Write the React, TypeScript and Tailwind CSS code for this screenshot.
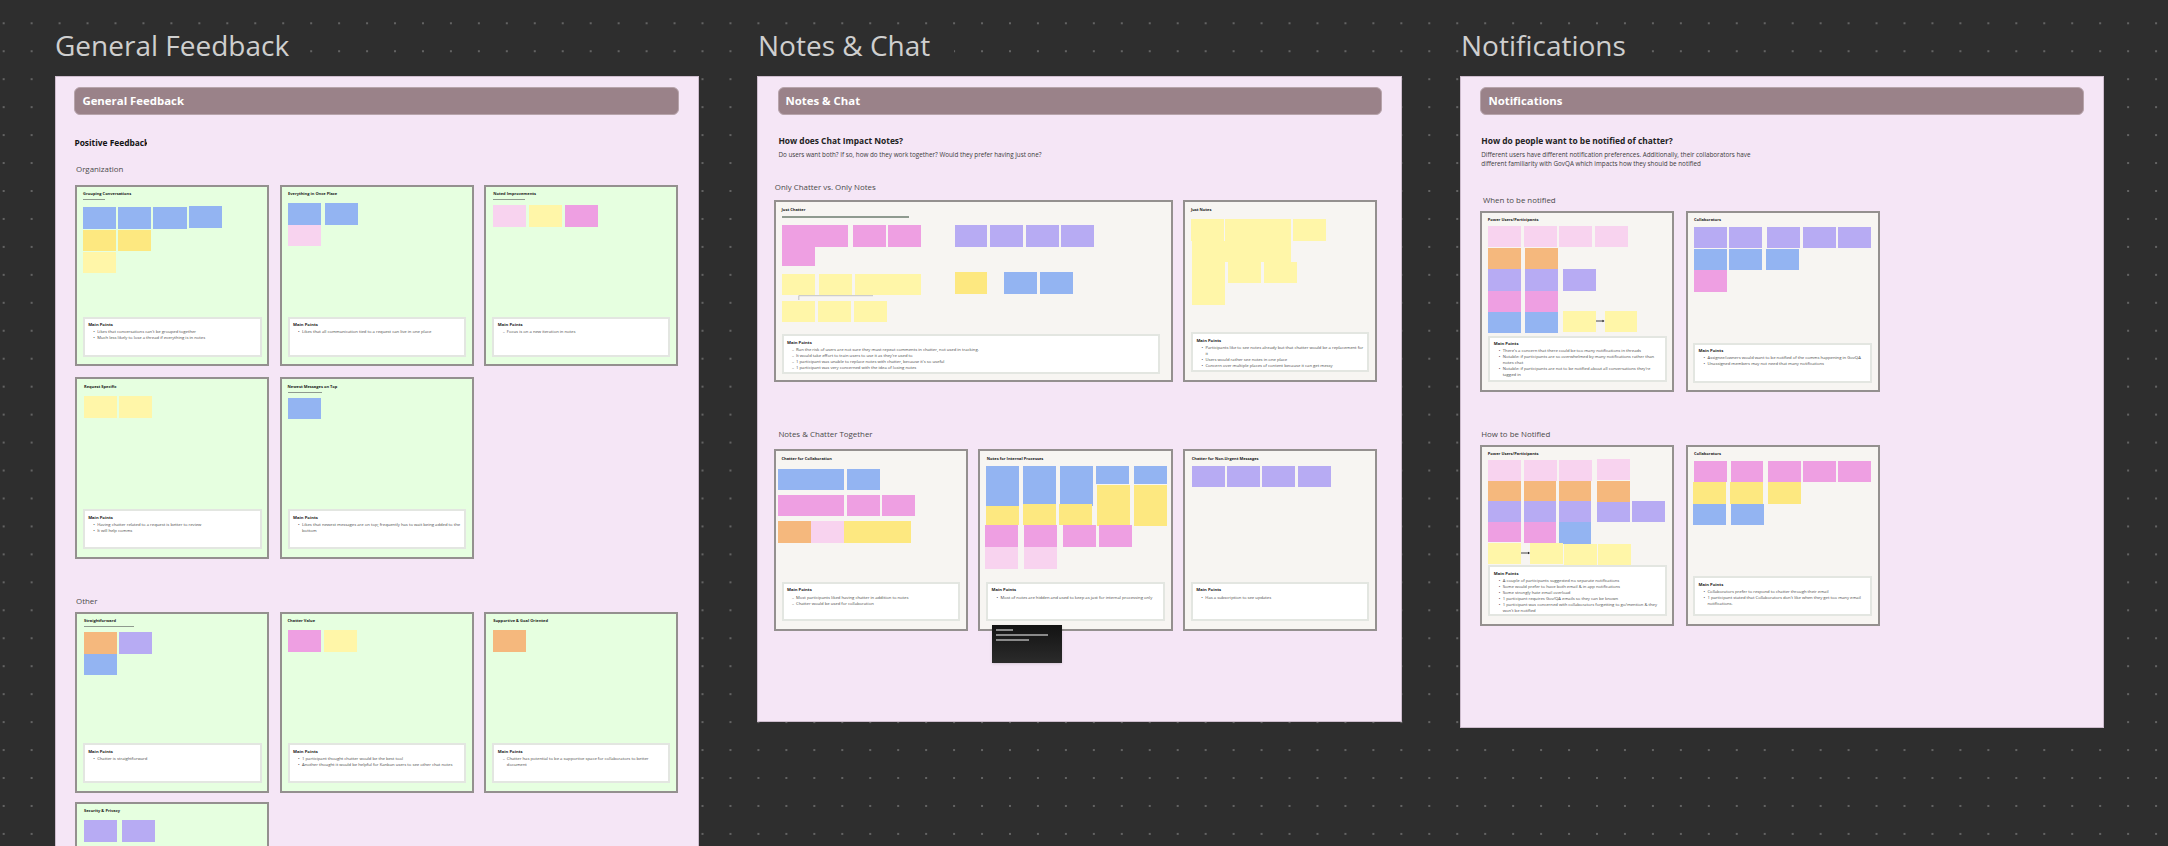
import React from "react";

const blue = "bg-[#93b4f2]";
const gold = "bg-[#fde880]";
const lemon = "bg-[#fff6a8]";
const pale = "bg-[#f8d3ef]";
const magenta = "bg-[#ee9fe2]";
const purple = "bg-[#b7abf3]";
const orange = "bg-[#f5b87d]";

type S = [number, number, number, number, string];
type Scale = { sx: number; ox: number };
const P1: Scale = { sx: 2.178, ox: 0 };
const P2: Scale = { sx: 2.24, ox: 740 };
const P3: Scale = { sx: 2.154, ox: 1440 };

// rows: [x0, x1, y0, y1, colour] measured on the board; oy is the board's y origin
function row(xs: [number, number][], y0: number, y1: number, c: string): S[] {
  return xs.map(([a, b]) => [a, b, y0, y1, c] as S);
}

function Arrow({ left, top, w }: { left: number; top: number; w: number }) {
  return (
    <svg className="absolute" style={{ left, top: top - 2 }} width={w} height={4} viewBox={`0 0 ${w} 4`}>
      <path d={`M0 2H${w - 1}`} stroke="#333" strokeWidth="0.9" />
      <path d={`M${w - 2} 0.8L${w} 2L${w - 2} 3.2Z`} fill="#222" />
    </svg>
  );
}

type CardProps = {
  scale: Scale;
  oy: number;
  cx: number;
  cy: number;
  w: number;
  h?: number;
  green?: boolean;
  title: string;
  titleX: number;
  titleY?: number;
  underline?: [number, number, number];
  stickies?: S[];
  box?: { x0: number; x1: number; y0: number; y1: number };
  points?: string[];
  dash?: boolean;
  children?: React.ReactNode;
};

function Card({ scale, oy, cx, cy, w, h = 181.5, green, title, titleX, titleY = 9.3, underline, stickies = [], box, points = [], dash, children }: CardProps) {
  const X = (z: number) => z / scale.sx + scale.ox - cx - 2;
  const Y = (z: number) => z / 3 + oy - cy - 2;
  return (
    <div
      className={`relative shrink-0 border-2 border-[#94908f] ${green ? "bg-[#e6ffe0]" : "bg-[#f7f5f2]"}`}
      style={{ width: w, height: h }}
    >
      <div
        className="absolute whitespace-nowrap text-[4px] leading-[6px] font-bold text-[#1c1c1c]"
        style={{ left: X(titleX), top: titleY - 5 }}
      >
        {title}
      </div>
      {underline && (
        <div
          className="absolute h-[1.5px] bg-[#8f9a8f]"
          style={{ left: X(underline[0]), width: (underline[1] - underline[0]) / scale.sx, top: Y(underline[2]) }}
        />
      )}
      {stickies.map(([a, b, c, d, col], i) => (
        <div
          key={i}
          className={`absolute ${col}`}
          style={{ left: X(a), top: Y(c), width: (b - a) / scale.sx, height: (d - c) / 3 }}
        />
      ))}
      {children}
      {box && (
        <div
          className="absolute overflow-hidden border-2 border-[#e3e6e1] bg-white pl-[3.5px] pr-[3px] pt-[3.5px]"
          style={{ left: X(box.x0), top: Y(box.y0), width: (box.x1 - box.x0) / scale.sx, height: (box.y1 - box.y0) / 3 }}
        >
          <div className="mb-[1.3px] text-[4.2px] leading-[6px] font-bold text-[#1c1c1c]">Main Points</div>
          <ul className="text-[4.2px] leading-[6px] text-[#4a4a4a]">
            {points.map((p, i) => (
              <li key={i} className="flex">
                <span className="w-[9px] shrink-0 pl-[5px]">{dash ? "–" : "•"}</span>
                <span>{p}</span>
              </li>
            ))}
          </ul>
        </div>
      )}
    </div>
  );
}

function BoardTitle({ children, w }: { children: React.ReactNode; w: number }) {
  return (
    <div
      className="h-[38px] whitespace-nowrap bg-[#2e2e2e] text-[28px] leading-[38px] text-[#cfcfcf]"
      style={{ width: w }}
    >
      {children}
    </div>
  );
}

function Header({ children, ml, w }: { children: React.ReactNode; ml: number; w: number }) {
  return (
    <div
      className="flex h-[27.4px] items-center rounded-[6px] border border-[#b7a4ab] bg-[#9a8289] pl-[7px] text-[11.4px] font-bold text-white"
      style={{ marginLeft: ml, width: w }}
    >
      {children}
    </div>
  );
}

function Section({ children, ml, mt }: { children: React.ReactNode; ml: number; mt: number }) {
  return (
    <div
      className="h-[14px] whitespace-nowrap text-[7.9px] leading-[14px] text-[#4b4b4b]"
      style={{ marginLeft: ml, marginTop: mt }}
    >
      {children}
    </div>
  );
}

function Panel({ w, h, children }: { w: number; h: number; children: React.ReactNode }) {
  return (
    <div className="relative mt-[12.3px] border border-[#cdbccd] bg-[#f5e6f6] pt-[10px]" style={{ width: w, height: h }}>
      {children}
    </div>
  );
}

function Generalboard() {
  const G = { scale: P1, green: true, w: 194 };
  return (
    <div className="w-[644px] shrink-0">
      <BoardTitle w={252}>General Feedback</BoardTitle>
      <Panel w={644} h={800}>
        <Header ml={18.4} w={605.1}>General Feedback</Header>
        <div className="ml-[18.4px] mt-[21.3px] h-[14px] w-[72.5px] overflow-hidden whitespace-nowrap text-[8.4px] leading-[14px] font-bold text-[#141414]">
          Positive Feedback
        </div>
        <Section ml={20} mt={12}>Organization</Section>
        <div className="ml-[19px] mt-[9px] grid grid-cols-[194px_194px_194px] gap-x-[10.7px] gap-y-[11px]">
          <Card {...G} oy={0} cx={75} cy={185} title="Grouping Conversations" titleX={181} underline={[181, 228, 597]}
            stickies={[
              ...row([[181, 253], [257, 329], [334, 407]], 622, 686, blue),
              ...row([[411, 483]], 619, 683, blue),
              ...row([[181, 253], [257, 329]], 689, 753, gold),
              ...row([[181, 253]], 756, 820, lemon),
            ]}
            box={{ x0: 180, x1: 570, y0: 950, y1: 1070 }}
            points={["Likes that conversations can't be grouped together", "Much less likely to lose a thread if everything is in notes"]}
          />
          <Card {...G} oy={0} cx={280} cy={185} title="Everything in Once Place" titleX={628}
            stickies={[
              ...row([[628, 700], [709, 781]], 610, 675, blue),
              ...row([[628, 700]], 675, 739, pale),
            ]}
            box={{ x0: 627, x1: 1016, y0: 950, y1: 1070 }}
            points={["Likes that all communication tied to a request can live in one place"]}
          />
          <Card {...G} oy={0} cx={484.7} cy={185} title="Noted Improvements" titleX={1075} underline={[1075, 1145, 597]}
            stickies={[
              ...row([[1075, 1147]], 616, 681, pale),
              ...row([[1152, 1224]], 616, 681, lemon),
              ...row([[1231, 1303]], 616, 681, magenta),
            ]}
            box={{ x0: 1073, x1: 1461, y0: 950, y1: 1070 }}
            points={["Focus is on a new iteration in notes"]} dash
          />
          <Card {...G} oy={0} cx={75} cy={377.5} title="Request Specific" titleX={183}
            stickies={row([[183, 255], [260, 332]], 1188, 1253, lemon)}
            box={{ x0: 180, x1: 570, y0: 1528.5, y1: 1648 }}
            points={["Having chatter related to a request is better to review", "It will help comms"]}
          />
          <Card {...G} oy={0} cx={280} cy={377.5} title="Newest Messages on Top" titleX={627} underline={[627, 703, 1175]}
            stickies={row([[627, 699]], 1193, 1257, blue)}
            box={{ x0: 627, x1: 1016, y0: 1528.5, y1: 1648 }}
            points={["Likes that newest messages are on top; frequently has to wait being added to the bottom"]}
          />
          <div />
        </div>
        <Section ml={20} mt={35.2}>Other</Section>
        <div className="ml-[19px] mt-[3.6px] grid grid-cols-[194px_194px_194px] gap-x-[10.7px] gap-y-[8.7px]">
          <Card {...G} oy={420} cx={75} cy={612} title="Straightforward" titleX={183} underline={[183, 292, 618]}
            stickies={[
              ...row([[183, 255]], 637, 702, orange),
              ...row([[260, 332]], 637, 702, purple),
              ...row([[183, 255]], 702, 767, blue),
            ]}
            box={{ x0: 180, x1: 570, y0: 970, y1: 1090 }}
            points={["Chatter is straightforward"]}
          />
          <Card {...G} oy={420} cx={280} cy={612} title="Chatter Value" titleX={627}
            stickies={[
              ...row([[627, 699]], 631, 696, magenta),
              ...row([[707, 779]], 631, 696, lemon),
            ]}
            box={{ x0: 627, x1: 1016, y0: 970, y1: 1090 }}
            points={["1 participant thought chatter would be the best tool", "Another thought it would be helpful for Kanban users to see other chat notes"]}
          />
          <Card {...G} oy={420} cx={484.7} cy={612} title="Supportive & Goal Oriented" titleX={1075}
            stickies={row([[1075, 1147]], 631, 696, orange)}
            box={{ x0: 1073, x1: 1461, y0: 970, y1: 1090 }}
            points={["Chatter has potential to be a supportive space for collaborators to better document"]} dash
          />
          <Card {...G} oy={420} cx={75} cy={802} title="Security & Privacy" titleX={183}
            stickies={row([[183, 255], [266, 338]], 1201, 1265, purple)}
          />
        </div>
      </Panel>
    </div>
  );
}

function NotesBoard() {
  const C = { scale: P2 };
  return (
    <div className="w-[645px] shrink-0">
      <BoardTitle w={197}>
        <span className="ml-[1px]">Notes &amp; Chat</span>
      </BoardTitle>
      <Panel w={645} h={645.4}>
        <Header ml={19.5} w={604.5}>Notes &amp; Chat</Header>
        <div className="ml-[20.4px] mt-[19.3px] h-[14px] whitespace-nowrap text-[8.4px] leading-[14px] font-bold text-[#222222]">
          How does Chat Impact Notes?
        </div>
        <div className="ml-[20.4px] mt-[1.8px] h-[9px] whitespace-nowrap text-[6.3px] leading-[9px] text-[#3c3c3c]">
          Do users want both? If so, how do they work together? Would they prefer having just one?
        </div>
        <Section ml={16.8} mt={21.2}>Only Chatter vs. Only Notes</Section>
        <div className="ml-[15.5px] mt-[6.3px] flex gap-[10.3px]">
          <Card {...C} oy={0} cx={773.5} cy={200.3} w={399.5} title="Just Chatter" titleX={93} underline={[93, 378, 649]}
            stickies={[
              ...row([[93, 241]], 676, 740, magenta),
              ...row([[93, 167]], 740, 799, magenta),
              ...row([[252, 326], [331, 405]], 676, 740, magenta),
              ...row([[481, 554], [559, 633], [641, 715], [719, 793]], 676, 741, purple),
              ...row([[93, 167], [178, 252], [258, 405]], 821, 885, lemon),
              ...row([[93, 167], [174, 248], [255, 329]], 902, 966, lemon),
              ...row([[481, 554]], 817, 881, gold),
              ...row([[592, 666], [672, 745]], 817, 881, blue),
            ]}
            box={{ x0: 93, x1: 941, y0: 1003, y1: 1121 }} dash
            points={[
              "Run the risk of users are not sure they must repeat comments in chatter, not used in tracking.",
              "It would take effort to train users to use it as they're used to",
              "1 participant was unable to replace notes with chatter, because it's so useful",
              "1 participant was very concerned with the idea of losing notes",
            ]}
          >
            <svg className="absolute left-[22px] top-[93px]" width="76" height="6" viewBox="0 0 76 6">
              <path d="M75 0.7H0.8V5" fill="none" stroke="#b5b5b5" strokeWidth="0.8" />
            </svg>
          </Card>
          <Card {...C} oy={0} cx={1183.3} cy={200.3} w={194.2} title="Just Notes" titleX={1010}
            stickies={[
              ...row([[1010, 1084], [1087, 1235], [1239, 1312]], 657, 722, lemon),
              ...row([[1012, 1087]], 722, 915, lemon),
              ...row([[1087, 1234]], 722, 786, lemon),
              ...row([[1094, 1168], [1173, 1247]], 786, 850, lemon),
            ]}
            box={{ x0: 1010, x1: 1410, y0: 997, y1: 1116 }}
            points={[
              "Participants like to see notes already but that chatter would be a replacement for it",
              "Users would rather see notes in one place",
              "Concern over multiple places of content because it can get messy",
            ]}
          />
        </div>
        <Section ml={20.4} mt={45.3}>Notes &amp; Chatter Together</Section>
        <div className="ml-[15.5px] mt-[8.3px] flex gap-[10.7px]">
          <Card {...C} oy={420} cx={773.5} cy={449.3} w={194.2} title="Chatter for Collaboration" titleX={93}
            stickies={[
              ...row([[86, 234], [240, 313]], 147, 211, blue),
              ...row([[86, 234], [240, 313], [318, 392]], 225, 289, magenta),
              ...row([[86, 160]], 304, 368, orange),
              ...row([[160, 234]], 304, 368, pale),
              ...row([[234, 382]], 304, 368, gold),
            ]}
            box={{ x0: 93, x1: 492, y0: 485, y1: 602 }} dash
            points={["Most participants liked having chatter in addition to notes", "Chatter would be used for collaboration"]}
          />
          <Card {...C} oy={420} cx={978.4} cy={449.3} w={194.2} title="Notes for Internal Processes" titleX={553}
            stickies={[
              ...row([[551, 625], [717, 791]], 137, 257, blue),
              ...row([[635, 709]], 137, 252, blue),
              ...row([[798, 872], [883, 956]], 137, 193, blue),
              ...row([[550, 624]], 257, 316, gold),
              ...row([[634, 708], [715, 788]], 252, 316, gold),
              ...row([[799, 873], [883, 956]], 194, 318, gold),
              ...row([[549, 623], [636, 710], [723, 797], [804, 878]], 316, 381, magenta),
              ...row([[549, 623], [636, 710]], 381, 446, pale),
            ]}
            box={{ x0: 551, x1: 951, y0: 485, y1: 602 }}
            points={["Most of notes are hidden and used to keep as just for internal processing only"]}
          />
          <Card {...C} oy={420} cx={1183.3} cy={449.3} w={194.2} title="Chatter for Non-Urgent Messages" titleX={1012}
            stickies={row([[1012, 1086], [1091, 1165], [1169, 1243], [1250, 1324]], 137, 202, purple)}
            box={{ x0: 1010, x1: 1410, y0: 485, y1: 602 }}
            points={["Has a subscription to see updates"]}
          />
        </div>
        <div className="absolute left-[234px] top-[548px] flex h-[38px] w-[70px] flex-col gap-[3.5px] bg-gradient-to-b from-[#131313] to-[#2b2b2b] pl-[4px] pt-[4px] shadow-sm">
          <div className="h-[1.5px] w-[17px] bg-[#8a8a8a]" />
          <div className="h-[1.5px] w-[52px] bg-[#8a8a8a]" />
          <div className="h-[1.5px] w-[33px] bg-[#8a8a8a]" />
        </div>
      </Panel>
    </div>
  );
}

function NotifBoard() {
  const C = { scale: P3, w: 194 };
  return (
    <div className="w-[644.3px] shrink-0">
      <BoardTitle w={170}>
        <span className="ml-[1px]">Notifications</span>
      </BoardTitle>
      <Panel w={644.3} h={652}>
        <Header ml={19.4} w={604}>Notifications</Header>
        <div className="ml-[20.3px] mt-[19.3px] h-[14px] whitespace-nowrap text-[8.4px] leading-[14px] font-bold text-[#222222]">
          How do people want to be notified of chatter?
        </div>
        <div className="ml-[20.3px] mt-[1.8px] w-[275px] text-[6.3px] leading-[9px] text-[#3c3c3c]">
          Different users have different notification preferences. Additionally, their collaborators have different familiarity with GovQA which impacts how they should be notified
        </div>
        <Section ml={22} mt={25.5}>When to be notified</Section>
        <div className="ml-[19.4px] mt-[3.4px] flex gap-[11.2px]">
          <Card {...C} oy={0} cx={1480.4} cy={210.7} title="Power Users/Participants" titleX={103}
            stickies={[
              ...row([[104, 174], [181, 251], [256, 327], [333, 404]], 678, 742, pale),
              ...row([[104, 174], [183, 254]], 743, 807, orange),
              ...row([[104, 174], [183, 254], [266, 337]], 808, 872, purple),
              ...row([[104, 174], [183, 254]], 873, 936, magenta),
              ...row([[104, 174], [183, 254]], 937, 1000, blue),
              ...row([[266, 337], [355, 425]], 933, 997, lemon),
            ]}
            box={{ x0: 104, x1: 489, y0: 1007, y1: 1147 }}
            points={[
              "There's a concern that there could be too many notifications in threads",
              "Notable: if participants are so overwhelmed by many notifications rather than notes chat",
              "Notable: if participants are not to be notified about all conversations they're tagged in",
            ]}
          >
            <Arrow left={114} top={108.6} w={8.5} />
          </Card>
          <Card {...C} oy={0} cx={1685.6} cy={210.7} title="Collaborators" titleX={547}
            stickies={[
              ...row([[547, 618], [622, 694], [704, 775], [781, 852], [858, 929]], 681, 745, purple),
              ...row([[547, 618], [622, 694], [702, 773]], 746, 810, blue),
              ...row([[547, 618]], 811, 875, magenta),
            ]}
            box={{ x0: 545, x1: 930, y0: 1028, y1: 1148 }}
            points={["Assignee/owners would want to be notified of the comms happening in GovQA", "Unassigned members may not need that many notifications"]}
          />
        </div>
        <Section ml={20.3} mt={34.7}>How to be Notified</Section>
        <div className="ml-[19.4px] mt-[3.7px] flex gap-[11.2px]">
          <Card {...C} oy={420} cx={1480.4} cy={444.7} title="Power Users/Participants" titleX={103}
            stickies={[
              ...row([[104, 174], [181, 251], [256, 327]], 120, 183, pale),
              ...row([[338, 409]], 116, 180, pale),
              ...row([[104, 174], [180, 250], [256, 326]], 183, 243, orange),
              ...row([[338, 409]], 182, 245, orange),
              ...row([[104, 174], [180, 250], [256, 326]], 243, 305, purple),
              ...row([[338, 409]], 245, 307, purple),
              ...row([[414, 484]], 243, 307, purple),
              ...row([[104, 174]], 305, 367, magenta),
              ...row([[180, 250]], 305, 370, magenta),
              ...row([[256, 326]], 307, 372, blue),
              ...row([[104, 174], [193, 264]], 368, 432, lemon),
              ...row([[267, 338], [341, 412]], 372, 436, lemon),
            ]}
            box={{ x0: 104, x1: 489, y0: 436, y1: 588 }}
            points={[
              "A couple of participants suggested no separate notifications",
              "Some would prefer to have both email & in app notifications",
              "Some strongly hate email overload",
              "1 participant requires Gov/QA emails so they can be known",
              "1 participant was concerned with collaborators forgetting to go/mention & they won't be notified",
            ]}
          >
            <Arrow left={38.4} top={106.6} w={9} />
          </Card>
          <Card {...C} oy={420} cx={1685.6} cy={444.7} title="Collaborators" titleX={547}
            stickies={[
              ...row([[547, 618], [626, 696], [706, 777], [782, 853], [857, 928]], 123, 187, magenta),
              ...row([[545, 616], [625, 696], [706, 777]], 187, 251, gold),
              ...row([[545, 616], [626, 697]], 252, 316, blue),
            ]}
            box={{ x0: 545, x1: 930, y0: 469, y1: 588 }}
            points={["Collaborators prefer to respond to chatter through their email", "1 participant stated that Collaborators don't like when they get too many email notifications."]}
          />
        </div>
      </Panel>
    </div>
  );
}

export default function App() {
  return (
    <div
      className="flex h-[846px] w-[2168px] gap-[58px] overflow-hidden bg-[#2e2e2e] bg-[radial-gradient(circle,#636363_0.9px,transparent_1.2px)] bg-[length:27.96px_27.96px] bg-[position:-10.3px_9.3px] pl-[55px] pt-[26px]"
      style={{ fontFamily: '"Open Sans", "Noto Sans", sans-serif' }}
    >
      <Generalboard />
      <NotesBoard />
      <NotifBoard />
    </div>
  );
}
